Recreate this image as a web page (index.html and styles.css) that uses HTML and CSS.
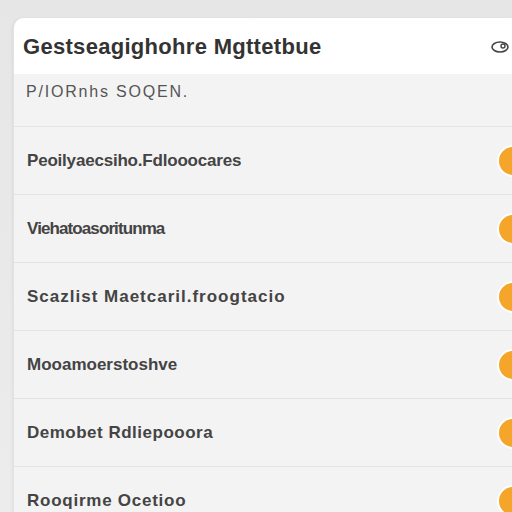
FILE: index.html
```html
<!DOCTYPE html>
<html>
<head>
<meta charset="utf-8">
<link rel="stylesheet" href="styles.css">
</head>
<body>
<div class="page">
  <div class="card">
    <div class="header">
      <span class="title">Gestseagighohre Mgttetbue</span>
      <svg class="hicon" width="24" height="14" viewBox="0 0 24 14"><ellipse cx="10" cy="7" rx="8" ry="5" fill="none" stroke="#444" stroke-width="1.6"/><circle cx="13" cy="6" r="2" fill="none" stroke="#444" stroke-width="1.4"/></svg>
    </div>
    <div class="sub">P/IORnhs SOQEN.</div>
    <div class="row"><span class="label w1">Peoilyaecsiho.Fdlooocares</span><span class="knob"></span></div>
    <div class="row"><span class="label w2">Viehatoasoritunma</span><span class="knob"></span></div>
    <div class="row"><span class="label w3">Scazlist Maetcaril.froogtacio</span><span class="knob"></span></div>
    <div class="row"><span class="label w4">Mooamoerstoshve</span><span class="knob"></span></div>
    <div class="row"><span class="label w5">Demobet Rdliepooora</span><span class="knob"></span></div>
    <div class="row"><span class="label w6">Rooqirme Ocetioo</span><span class="knob"></span></div>
  </div>
</div>
</body>
</html>
```
FILE: styles.css
```css
* { box-sizing: border-box; }
html, body { margin: 0; padding: 0; }
body {
  width: 512px;
  height: 512px;
  overflow: hidden;
  background: linear-gradient(180deg, #e6e6e6 0%, #ececec 100%);
  font-family: "Liberation Sans", Arial, sans-serif;
}
.page {
  padding: 18px 0 0 13px;
}
.card {
  background: #f3f3f3;
  border-radius: 10px 0 0 0;
  border-left: 1px solid #e2e2e2;
  box-shadow: -1px 0 3px rgba(0,0,0,0.05);
}
.header {
  height: 56px;
  background: #ffffff;
  border-radius: 10px 0 0 0;
  display: flex;
  align-items: center;
  justify-content: space-between;
  padding: 0 0 0 9px;
}
.title {
  font-size: 22px;
  font-weight: 700;
  color: #333;
  letter-spacing: 0.3px;
  margin-top: 2px;
}
.hicon { margin-right: -2px; margin-top: 2px; }
.sub {
  height: 53px;
  padding: 9px 0 0 12px;
  font-size: 16px;
  color: #555;
  letter-spacing: 1.8px;
  border-bottom: 1px solid #e4e4e4;
}
.row {
  height: 68px;
  display: flex;
  align-items: center;
  justify-content: space-between;
  border-bottom: 1px solid #e3e3e3;
  padding-left: 13px;
}
.label {
  font-size: 17px;
  color: #444;
  font-weight: 700;
}
.w1 { letter-spacing: -0.2px; }
.w2 { letter-spacing: -0.9px; }
.w3 { letter-spacing: 1.0px; }
.w4 { letter-spacing: 0px; }
.w5 { letter-spacing: 0.5px; }
.w6 { letter-spacing: 0.75px; }
.knob {
  width: 32px;
  height: 32px;
  border-radius: 50%;
  background: #f6a52b;
  border: 2px solid #ffffff;
  margin-right: -17px;
  flex: none;
}
```
